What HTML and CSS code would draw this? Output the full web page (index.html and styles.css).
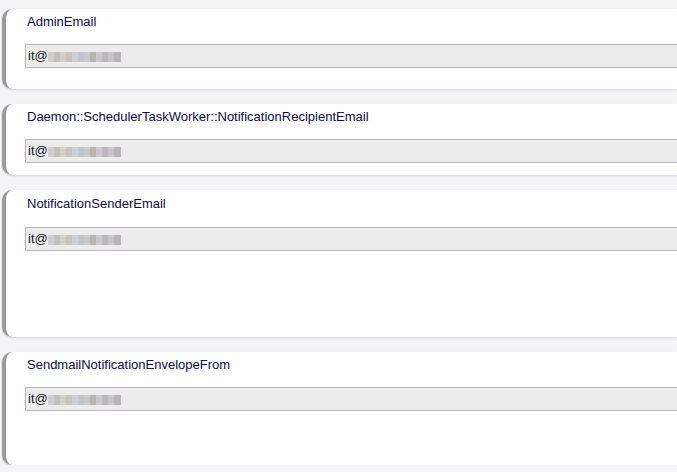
FILE: index.html
```html
<!DOCTYPE html>
<html>
<head>
<meta charset="utf-8">
<link rel="stylesheet" href="styles.css">
</head>
<body>
<div class="list">
  <div class="card c1">
    <div class="label">AdminEmail</div>
    <div class="field"><span class="val">it@</span><span class="mask m1"></span></div>
  </div>
  <div class="card c2">
    <div class="label">Daemon::SchedulerTaskWorker::NotificationRecipientEmail</div>
    <div class="field"><span class="val">it@</span><span class="mask m2"></span></div>
  </div>
  <div class="card c3">
    <div class="label">NotificationSenderEmail</div>
    <div class="field"><span class="val">it@</span><span class="mask m3"></span></div>
  </div>
  <div class="card c4">
    <div class="label">SendmailNotificationEnvelopeFrom</div>
    <div class="field"><span class="val">it@</span><span class="mask m4"></span></div>
  </div>
</div>
</body>
</html>
```
FILE: styles.css
```css
html, body {
  margin: 0;
  padding: 0;
  background: #f4f4f6;
  font-family: "Liberation Sans", Arial, sans-serif;
}
.list {
  display: flex;
  flex-direction: column;
  gap: 15px;
  padding: 9px 0 0 2px;
}
.card {
  background: #fff;
  border-left: 4px solid #9a9a9a;
  border-radius: 10px 0 0 10px;
  box-shadow: 0 1px 2px rgba(120, 110, 150, 0.25);
  padding: 5px 0 0 19px;
  box-sizing: border-box;
}
.c1 { height: 80px; }
.c2 { height: 71px; }
.c3 { height: 147px; padding-top: 6px; }
.c4 { height: 113px; }
.label {
  font-size: 13px;
  color: #0c0c48;
  line-height: 15px;
  padding-left: 2px;
  margin-bottom: 15px;
}
.c3 .label { margin-bottom: 16px; }
.field {
  height: 24px;
  box-sizing: border-box;
  border: 1px solid #bab6cc;
  border-right: none;
  background: #ececec;
  display: flex;
  align-items: center;
  padding-left: 2px;
  font-size: 13px;
  color: #222;
}
.val { line-height: 14px; }
.mask {
  display: inline-block;
  height: 10px;
  width: 73px;
  margin-top: 2px;
  background:
    linear-gradient(90deg,
      #c8c6c8 0 6px, #b8b4b6 6px 12px, #cbc7c4 12px 18px, #bdb7b2 18px 24px,
      #c5cad0 24px 30px, #b7bcc4 30px 36px, #c3c0c0 36px 42px, #aaa6aa 42px 48px,
      #c2bfc2 48px 54px, #b0aab0 54px 60px, #bfbbbe 60px 66px, #a9a6ab 66px 73px);
  opacity: 0.8;
}
```
